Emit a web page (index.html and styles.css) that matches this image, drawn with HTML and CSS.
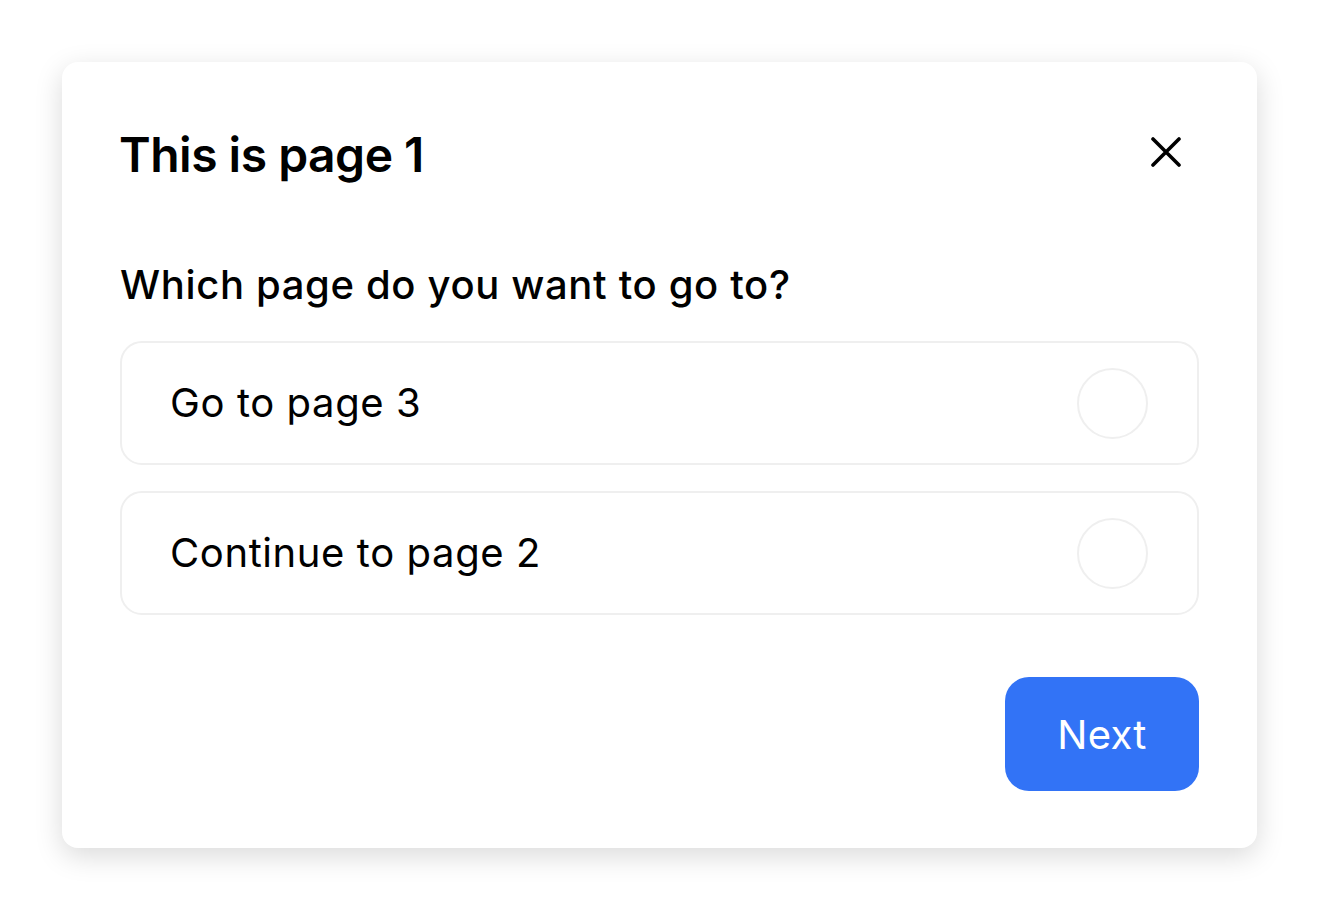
FILE: index.html
```html
<!DOCTYPE html>
<html lang="en">
<head>
<meta charset="utf-8">
<title>Page 1</title>
<link rel="stylesheet" href="styles.css">
</head>
<body>
<div class="page">
  <div class="card">
    <div class="header">
      <h1 class="title">This is page 1</h1>
      <button class="close" aria-label="Close">
        <svg width="30" height="30" viewBox="0 0 30 30" fill="none" stroke="#000" stroke-width="3.6" stroke-linecap="round">
          <path d="M2 2 L28 28 M28 2 L2 28"/>
        </svg>
      </button>
    </div>
    <p class="question">Which page do you want to go to?</p>
    <div class="options">
      <label class="option">
        <span class="option-text">Go to page 3</span>
        <span class="radio"></span>
      </label>
      <label class="option">
        <span class="option-text">Continue to page 2</span>
        <span class="radio"></span>
      </label>
    </div>
    <div class="footer">
      <button class="next">Next</button>
    </div>
  </div>
</div>
</body>
</html>
```
FILE: styles.css
```css
html, body {
  margin: 0;
  padding: 0;
  background: #ffffff;
}
body {
  font-family: Inter, "Noto Sans", "Liberation Sans", sans-serif;
  color: #000;
  min-height: 910px;
}
.page {
  padding: 62px 62px 62px 62px;
}
.card {
  width: 1195px;
  height: 786px;
  box-sizing: border-box;
  background: #fff;
  border-radius: 16px;
  box-shadow: 0 8px 28px rgba(0, 0, 0, 0.15);
  padding: 64px 58px 57px 58px;
  display: flex;
  flex-direction: column;
}
.header {
  display: flex;
  align-items: center;
  justify-content: space-between;
}
.title {
  margin: 0 0 0 -1px;
  font-size: 48px;
  line-height: 58px;
  font-weight: 600;
  letter-spacing: -0.5px;
}
.close {
  border: 0;
  background: none;
  padding: 0;
  width: 30px;
  height: 30px;
  margin-right: 18px;
  margin-bottom: 7px;
  display: flex;
}
.question {
  margin: 77px 0 0 0;
  font-size: 40px;
  line-height: 48px;
  font-weight: 500;
  letter-spacing: 0.65px;
}
.options {
  margin-top: 32px;
  display: flex;
  flex-direction: column;
  gap: 26px;
}
.option {
  height: 124px;
  box-sizing: border-box;
  border: 2px solid #efefef;
  border-radius: 22px;
  display: flex;
  align-items: center;
  justify-content: space-between;
  padding: 0 49px 0 48px;
}
.option-text {
  font-size: 40px;
  line-height: 48px;
  font-weight: 400;
  letter-spacing: 0.6px;
}
.radio {
  width: 71px;
  height: 71px;
  box-sizing: border-box;
  border: 2px solid #efefef;
  border-radius: 50%;
}
.footer {
  margin-top: auto;
  display: flex;
  justify-content: flex-end;
}
.next {
  width: 194px;
  height: 114px;
  border: 0;
  border-radius: 24px;
  background: #3273f6;
  color: #fff;
  font-family: inherit;
  font-size: 40px;
  font-weight: 400;
  letter-spacing: 0.3px;
  padding: 0;
}
```
